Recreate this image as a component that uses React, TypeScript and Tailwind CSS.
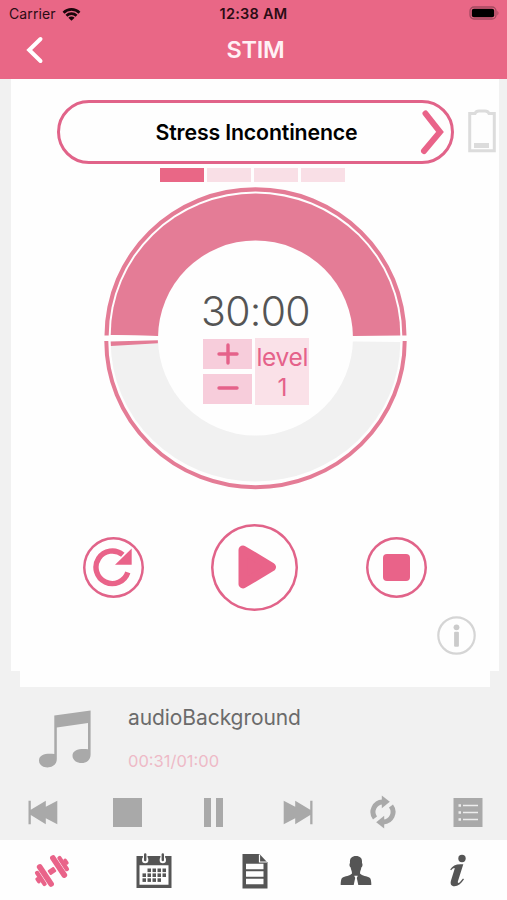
import type { ReactNode } from "react";

const CX = 151.5;
const CY = 151;

function StatusBar() {
  return (
    <div className="grid h-[27px] grid-cols-3 items-center px-[9px] text-[14px] leading-none text-[#2b0c14]">
      <div className="flex items-center gap-[6px]">
        <span className="tracking-[0.1px]">Carrier</span>
        <svg width="19" height="14" viewBox="0 0 19 14">
          <path d="M0.6 4.8a12.6 12.6 0 0 1 17.8 0l-1.9 1.9a9.9 9.9 0 0 0-14 0z" fill="#1a060b" />
          <path d="M3.5 7.8a8.5 8.5 0 0 1 12 0l-1.9 1.9a5.8 5.8 0 0 0-8.2 0z" fill="#1a060b" />
          <path d="M6.4 10.7a4.4 4.4 0 0 1 6.2 0L9.5 13.8z" fill="#1a060b" />
        </svg>
      </div>
      <div className="pt-px text-center text-[14.5px] font-semibold tracking-[0.25px] whitespace-nowrap">12:38 AM</div>
      <div className="flex justify-end">
        <svg width="31" height="15" viewBox="0 0 31 15" className="-mr-[2px]">
          <rect x="1" y="1" width="26" height="12" rx="4" fill="none" stroke="#a34a60" strokeWidth="1.3" />
          <rect x="2.8" y="2.8" width="22.4" height="8.4" rx="2" fill="#000" />
          <path d="M28.4 4.8q2.2 2.3 0 4.6z" fill="#a34a60" />
        </svg>
      </div>
    </div>
  );
}

function Header() {
  return (
    <header className="h-[79px] shrink-0 bg-[#e96786]">
      <StatusBar />
      <div className="grid h-[45px] grid-cols-3 items-center">
        <svg width="18" height="28" viewBox="0 0 18 28" className="ml-[26px]">
          <path d="M14.5 3L3.2 14l11.3 11" fill="none" stroke="#fff" strokeWidth="4" strokeLinecap="round" />
        </svg>
        <h1 className="pl-[4px] text-center text-[23.500px] font-semibold tracking-[-0.3px] text-[#fff1f5]">STIM</h1>
      </div>
    </header>
  );
}

function ProgramPicker() {
  return (
    <div className="flex h-[64px] items-center justify-between pr-[3px] pl-[45.5px]">
      <button className="flex h-[64px] w-[397px] items-center rounded-full border-[3px] border-[#e16389] pr-[6px] pl-[30px]">
        <span className="grow pt-px pl-[5px] text-center text-[21.3px] font-semibold tracking-[-0.15px] text-black">Stress Incontinence</span>
        <svg width="26" height="46" viewBox="0 0 26 46">
          <path d="M6.5 4.500L21 23L5 42" fill="none" stroke="#e96389" strokeWidth="6" strokeLinecap="round" />
        </svg>
      </button>
      <svg width="28" height="44" viewBox="0 0 28 44" className="-mt-[3px]">
        <path d="M1.7 4.5H7Q8 2 11 2h6q3 0 4 2.500h5.300V41.800H1.700z" fill="none" stroke="#dcdcdc" strokeWidth="3" />
        <rect x="6" y="34" width="15" height="5" fill="#dcdcdc" />
      </svg>
    </div>
  );
}

function Dial() {
  return (
    <div className="relative mt-[5px] ml-[93px] h-[303px] w-[303px]">
      <svg width="303" height="303" viewBox="0 0 303 303">
        <path d="M0.500 148.600A151 148.400 0 0 1 302.500 148.600H298.300A146.800 144.200 0 0 0 4.700 148.600z" fill="#e47c96" />
        <path d="M6.700 148A144.800 141.700 0 0 1 296.300 148.600L249.500 149H53.500z" fill="#e47c96" />
        <path d="M6.700 154.500H249.500L296.300 155A144.800 139.700 0 0 1 6.700 154.500z" fill="#f1f1f1" />
        <path d="M2.300 154A149.200 146.300 0 0 0 300.700 154" fill="none" stroke="#e47c96" strokeWidth="4" />
        <circle cx={CX} cy={CY} r="97.500" fill="#fefefe" />
        <path d="M6.700 148L53.500 149V153.300L6.700 154.600z" fill="#fefefe" />
        <path d="M6.700 154.600L53.900 153.300V156.300L6.900 158.900z" fill="#e47c96" />
      </svg>
      <div className="absolute inset-x-0 top-[101px] flex flex-col items-center">
        <div className="h-[50px] text-[41px] leading-[47px] font-[350] tracking-[-0.7px] text-[#555555]">30:00</div>
        <div className="flex gap-[3px] pl-[1.5px] text-[#e5628a]">
          <div className="flex flex-col gap-[5px] pt-[1px]">
            <button className="flex h-[30px] w-[49px] items-center justify-center bg-[#f7cddb]">
              <svg width="22" height="22" viewBox="0 0 22 22" stroke="currentColor" strokeWidth="3.400" strokeLinecap="round">
                <path d="M2 11h18M11 2v18" />
              </svg>
            </button>
            <button className="flex h-[30px] w-[49px] items-center justify-center bg-[#f7cddb]">
              <svg width="22" height="22" viewBox="0 0 22 22" stroke="currentColor" strokeWidth="3.400" strokeLinecap="round">
                <path d="M2 10h18" />
              </svg>
            </button>
          </div>
          <div className="h-[67px] w-[54px] bg-[#fae1e8] pt-[4px] text-center text-[24.500px] leading-[30px] tracking-[-0.300px]">
            <div>level</div>
            <div>1</div>
          </div>
        </div>
      </div>
    </div>
  );
}

function RoundButton({ size, children }: { size: number; children: ReactNode }) {
  return (
    <button className="flex items-center justify-center rounded-full shadow-[inset_0_0_0_2.5px_#e16389]" style={{ width: size, height: size }}>
      {children}
    </button>
  );
}

function Transport() {
  return (
    <div className="mt-[33.5px] flex h-[87px] items-center justify-between pr-[72px] pl-[71.5px]">
      <RoundButton size={61}>
        <svg width="42" height="42" viewBox="0 0 42 42" className="shrink-0">
          <path d="M30.800 8.800A16.300 16.300 0 1 0 35.800 26.300" fill="none" stroke="#e96389" strokeWidth="5.400" />
          <path d="M39.700 2.500V18.700H23z" fill="#e96389" />
        </svg>
      </RoundButton>
      <RoundButton size={87}>
        <svg width="42" height="46" viewBox="0 0 42 46" className="ml-[4px]">
          <path d="M7 6L35.500 23L7 40z" fill="#e96389" stroke="#e96389" strokeWidth="9" strokeLinejoin="round" />
        </svg>
      </RoundButton>
      <RoundButton size={61}>
        <div className="h-[27px] w-[27px] rounded-[4px] bg-[#e96389]" />
      </RoundButton>
    </div>
  );
}

function StimPanel() {
  const steps = [true, false, false, false];
  return (
    <>
      <main className="mr-[8px] ml-[11px] h-[592px] shrink-0 bg-[#fefefe] pt-[21px]">
        <ProgramPicker />
        <div className="mt-[4px] ml-[149px] flex gap-[3.500px]">
          {steps.map((on, i) => (
            <div key={i} className={on ? "h-[14px] w-[43.500px] bg-[#e96786]" : "h-[14px] w-[43.500px] bg-[#f9dfe6]"} />
          ))}
        </div>
        <Dial />
        <Transport />
        <div className="mt-[5.5px] flex justify-end pr-[23px]">
          <svg width="39" height="39" viewBox="0 0 39 39">
            <circle cx="19.500" cy="19.500" r="18.200" fill="none" stroke="#d5d5d5" strokeWidth="2.200" />
            <circle cx="19.500" cy="11.300" r="2.900" fill="#cbcbcb" />
            <rect x="17.100" y="15.800" width="4.800" height="15" rx="1" fill="#cbcbcb" />
          </svg>
        </div>
      </main>
      <div className="mr-[17px] ml-[20px] h-[16px] shrink-0 bg-[#fefefe]" />
    </>
  );
}

function SkipIcon({ flip }: { flip?: boolean }) {
  return (
    <svg width="30" height="25" viewBox="0 0 30 25" fill="#a9a9a9" className={flip ? "-scale-x-100" : ""}>
      <path d="M0.500 0.800h2.300v9L17.800 0.800v6L29.300 0.800v23.400L17.800 18.200v6L2.800 15v9.200H0.500z" />
    </svg>
  );
}

function AudioPlayer() {
  return (
    <section className="h-[153px] shrink-0">
      <div className="flex h-[97px] pt-[18px] pl-[38px]">
        <svg width="54" height="64" viewBox="0 0 54 64" fill="#a9a9a9">
          <path d="M16.300 10.500L52.600 5.500V49.500C52.600 61.500 34.500 60 34.500 50.800C34.500 44.500 42.500 43.300 50 44.300V18L18.800 22.500V54C18.800 65 1 65 1 55.500C1 49 9 48 16.300 49z" />
        </svg>
        <div className="ml-[36px] flex flex-col">
          <div className="pt-px text-[21px] leading-[24px] tracking-[-0.080px] text-[#6b6b6b]">audioBackground</div>
          <div className="mt-[21px] text-[16.500px] leading-[20px] text-[#eebac7]">00:31/01:00</div>
        </div>
      </div>
      <div className="ml-[0.500px] grid h-[56px] w-[510px] grid-cols-6 place-items-center">
        <SkipIcon />
        <div className="mr-px h-[29px] w-[29px] bg-[#a9a9a9]" />
        <div className="flex gap-[5px]">
          <div className="h-[29px] w-[7px] bg-[#a9a9a9]" />
          <div className="h-[29px] w-[7px] bg-[#a9a9a9]" />
        </div>
        <SkipIcon flip />
        <svg width="26" height="34" viewBox="0 0 26 34">
          {[0, 180].map((turn) => (
            <g key={turn} transform={`rotate(${turn} 13 17)`}>
              <path d="M5 23A10 10 0 0 1 12.500 7" fill="none" stroke="#a9a9a9" strokeWidth="5" />
              <path d="M11.800 0.500L19.800 6.800L11.800 13.200z" fill="#a9a9a9" />
            </g>
          ))}
        </svg>
        <svg width="30" height="29" viewBox="0 0 30 29">
          <rect x="0.500" width="29" height="29" fill="#a9a9a9" />
          <path d="M10 7.500h15M10 14.500h15M10 21.500h15" stroke="#ededed" strokeWidth="1.500" />
          <path d="M5.500 7.500h2.500M5.500 14.500h2.500M5.500 21.500h2.500" stroke="#ededed" strokeWidth="2.400" />
        </svg>
      </div>
    </section>
  );
}

function DumbbellIcon() {
  return (
    <svg width="38" height="34" viewBox="-1 0 38 34" className="-ml-[2px]">
      <g transform="rotate(-33.700 18 17)" fill="#e96389">
        <rect x="14.300" y="14.200" width="7.400" height="5.600" rx="0.800" />
        <rect x="7.200" y="4" width="5.700" height="26" rx="2.700" />
        <rect x="2.400" y="8.300" width="4.300" height="17.400" rx="1.900" />
        <rect x="-0.600" y="13.700" width="3.600" height="6.600" rx="1.600" />
        <rect x="23.100" y="4" width="5.700" height="26" rx="2.700" />
        <rect x="29.300" y="8.300" width="4.300" height="17.400" rx="1.900" />
        <rect x="33" y="13.700" width="3.600" height="6.600" rx="1.600" />
      </g>
    </svg>
  );
}

function CalendarIcon() {
  const rows = [
    [11, 16, 21, 26],
    [6, 11, 16, 21, 26],
    [6, 11, 16, 21],
  ];
  return (
    <svg width="36" height="36" viewBox="0 0 36 36">
      <path d="M0.500 3h35v32h-35zM3.500 12.200v19.600h29V12.200z" fill="#555" fillRule="evenodd" />
      {[9.200, 26.800].map((x) => (
        <g key={x}>
          <circle cx={x} cy="7" r="3.200" fill="#fefefe" />
          <rect x={x - 2.300} y="0" width="4.600" height="7" fill="#fefefe" />
          <path d={`M${x} 1.500v5.500`} stroke="#555" strokeWidth="2.400" strokeLinecap="round" />
        </g>
      ))}
      {rows.map((row, r) =>
        row.map((x) => <rect key={`${r}-${x}`} x={x + 0.500} y={15.500 + r * 4.900} width="3.500" height="3.600" fill="#555" />),
      )}
    </svg>
  );
}

function DocumentIcon() {
  return (
    <svg width="26" height="36" viewBox="0 0 26 36">
      <path d="M0.500 1H17.500L25.500 9.500V35.500H0.500z" fill="#555" />
      <path d="M17.500 1.500V9H25" fill="none" stroke="#fefefe" strokeWidth="1.200" />
      <path d="M4 10.800h17.500v5.500H4zM4 18.200h17.500v5.500H4zM4 25.800h17.500v5.500H4z" fill="#fefefe" />
    </svg>
  );
}

function PersonIcon() {
  return (
    <svg width="32" height="31" viewBox="0 0 32 31" fill="#555" className="-mt-px">
      <path d="M10 8C9.500 3 12 1 16 1S22.500 3 22 8C23 9 22.500 12 21.300 12.500C21 15 20 16 20 18.500C22 21 27 21 30 23Q31.300 24.500 31.300 30H0.700Q0.700 24.500 2 23C5 21 10 21 12 18.500C12 16 11 15 10.700 12.500C9.500 12 9 9 10 8z" />
      <path d="M14.200 20.700h3.600l-1 2.200 1.500 7.100h-4.600l1.500-7.100z" fill="#fefefe" />
    </svg>
  );
}

function InfoIcon() {
  return (
    <svg width="18" height="34" viewBox="0 0 18 34" fill="#555" className="ml-[2px]">
      <circle cx="13" cy="4.500" r="3.700" />
      <path d="M1.200 15.500C3.500 12 6.500 10.300 11.500 10.300H14.300L9 27C8.400 29 9.300 29.500 10.800 28.300L14 24.500L15 25.300C12 30 9 32.300 5.500 32.300C2 32.300 1 29.800 2 26.500L5.500 15.300C6.100 13.200 4.500 13.500 2.100 16.300z" />
    </svg>
  );
}

function TabBar() {
  return (
    <nav className="grid h-[60px] shrink-0 grid-cols-5 place-items-center bg-[#fefefe] pt-[2px] pl-[2px]">
      <DumbbellIcon />
      <CalendarIcon />
      <DocumentIcon />
      <PersonIcon />
      <InfoIcon />
    </nav>
  );
}

export default function App() {
  return (
    <div className="flex h-[900px] w-[507px] flex-col overflow-hidden bg-[#f1f1f1] font-['Inter','Liberation_Sans',sans-serif]">
      <Header />
      <StimPanel />
      <AudioPlayer />
      <TabBar />
    </div>
  );
}
